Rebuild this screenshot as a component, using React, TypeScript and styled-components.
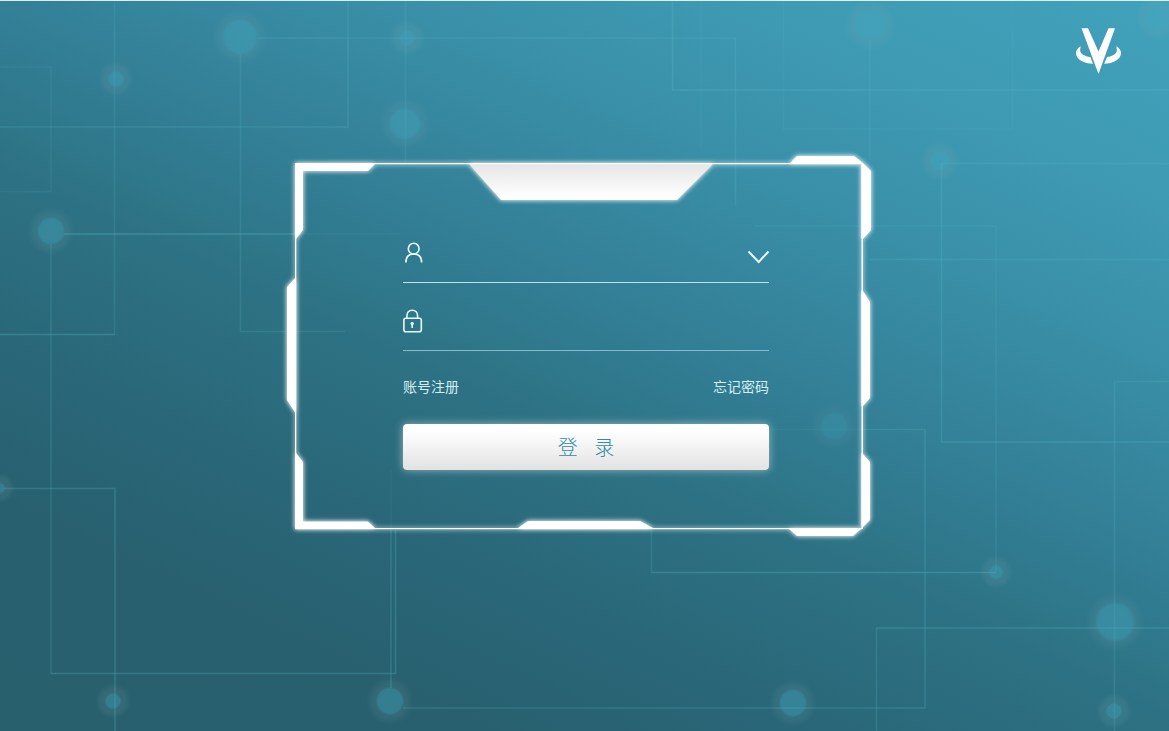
import React from "react";
import styled, { createGlobalStyle } from "styled-components";

const GlobalStyle = createGlobalStyle`
  *, *::before, *::after { box-sizing: border-box; }
  body {
    margin: 0;
    font-family: "Liberation Sans", "Noto Sans CJK SC", sans-serif;
    color: #fff;
  }
`;

const Page = styled.div`
  position: relative;
  display: flex;
  flex-direction: column;
  min-height: 100vh;
  overflow: hidden;
  border-top: 1px solid #d9f1f5;
  background: linear-gradient(
    25deg,
    #28606e 0%,
    #28606f 18%,
    #296677 29%,
    #2d7284 44%,
    #338097 57%,
    #398fa7 71%,
    #3f9bb4 86%,
    #41a1bb 100%
  );
`;

const Circuit = styled.svg`
  position: absolute;
  inset: 0;
  width: 100%;
  height: 100%;
  pointer-events: none;
`;

const Header = styled.header`
  position: relative;
  display: flex;
  justify-content: flex-end;
  padding: 26px 46px 0;
`;

const LogoLink = styled.a`
  display: block;
  width: 48px;
  height: 48px;
  color: #fff;
`;

const Main = styled.main`
  position: relative;
  display: flex;
  justify-content: center;
  padding: 81px 12px 64px 0;
`;

const Panel = styled.section`
  position: relative;
  width: 583px;
  max-width: 100%;
  padding: 59px 101px 66px 116px;
`;

const Frame = styled.svg`
  position: absolute;
  inset: 0;
  width: 100%;
  height: 100%;
  overflow: visible;
  pointer-events: none;
  filter: drop-shadow(0 0 2px rgba(255, 255, 255, 0.6))
    drop-shadow(0 0 2px rgba(255, 255, 255, 0.6));
`;

const Form = styled.form`
  position: relative;
  display: flex;
  flex-direction: column;
`;

const Field = styled.label<{ $line: string }>`
  display: flex;
  align-items: center;
  gap: 16px;
  height: 68px;
  padding-top: 8px;
  border-bottom: 1px solid ${(p) => p.$line};
`;

const FieldIcon = styled.svg`
  flex: none;
  width: 20px;
  height: 24px;
  fill: none;
  stroke: #e6fbff;
  stroke-width: 1.6;
`;

const Input = styled.input`
  flex: 1;
  min-width: 0;
  height: 40px;
  padding: 0;
  border: 0;
  outline: 0;
  background: transparent;
  color: #fff;
  font: inherit;
  font-size: 16px;
`;

const Toggle = styled.button`
  flex: none;
  width: 22px;
  height: 24px;
  padding: 0;
  border: 0;
  background: transparent;
  cursor: pointer;
  svg {
    display: block;
    fill: none;
    stroke: #e6fbff;
    stroke-width: 2;
  }
`;

const Links = styled.nav`
  display: flex;
  justify-content: space-between;
  margin: 26px 0 27px;
`;

const TextLink = styled.a`
  color: #d3edf2;
  font-size: 14px;
  font-weight: 400;
  line-height: 20px;
  text-decoration: none;
`;

const Submit = styled.button`
  height: 46px;
  padding: 2px 0 0;
  border: 0;
  border-radius: 4px;
  background: linear-gradient(#fff 15%, #e2e2e2);
  box-shadow: 0 0 8px rgba(255, 255, 255, 0.5);
  color: #318ba6;
  font-family: inherit;
  font-size: 20px;
  font-weight: 300;
  line-height: 44px;
  white-space: pre;
  cursor: pointer;
`;

const traces: { d: string; o: number }[] = [
  { d: "M257 38H735.500V205", o: 0.3 },
  { d: "M348 0V127H0", o: 0.28 },
  { d: "M114.500 0V334.500", o: 0.24 },
  { d: "M0 334.500H115", o: 0.42 },
  { d: "M0 67H51V191.500H0", o: 0.16 },
  { d: "M240.500 54V331.500H345", o: 0.24 },
  { d: "M64 234H296", o: 0.48 },
  { d: "M296 234H400", o: 0.15 },
  { d: "M51 244V673.500", o: 0.26 },
  { d: "M51 673.500H395.500V530", o: 0.36 },
  { d: "M391 530V688", o: 0.32 },
  { d: "M391 470V530", o: 0.1 },
  { d: "M405.500 0V162", o: 0.2 },
  { d: "M4 488.500H115V731", o: 0.34 },
  { d: "M403 708H925V429.500H860", o: 0.3 },
  { d: "M860 429.500H772", o: 0.12 },
  { d: "M651.500 530V572.500", o: 0.24 },
  { d: "M651.500 572.500H996", o: 0.42 },
  { d: "M996 572V226H755", o: 0.2 },
  { d: "M876.500 731V628", o: 0.28 },
  { d: "M876.500 628H1169", o: 0.34 },
  { d: "M1114.500 731V381.500H1169", o: 0.28 },
  { d: "M941.500 163.500V442H1169", o: 0.34 },
  { d: "M941.500 163.500H1169", o: 0.34 },
  { d: "M870 259.500H1169", o: 0.32 },
  { d: "M870 40V160", o: 0.24 },
  { d: "M672.500 0V90H1169", o: 0.36 },
  { d: "M701 0V150", o: 0.14 },
  { d: "M783.500 0V129H1012.500V0", o: 0.14 },
];

const nodes: { x: number; y: number; r: number; o?: number }[] = [
  { x: 240, y: 37, r: 17 },
  { x: 116, y: 79, r: 7 },
  { x: 51, y: 231, r: 13 },
  { x: 407, y: 38, r: 7 },
  { x: 405, y: 124, r: 15 },
  { x: 870, y: 25, r: 15 },
  { x: 940, y: 161, r: 9 },
  { x: 1157, y: 18, r: 11 },
  { x: 0, y: 488, r: 4 },
  { x: 113, y: 701, r: 7 },
  { x: 390, y: 701, r: 13 },
  { x: 793, y: 703, r: 13 },
  { x: 834, y: 426, r: 13, o: 0.6 },
  { x: 996, y: 572, r: 6 },
  { x: 1115, y: 622, r: 19 },
  { x: 1114, y: 711, r: 7 },
];

const CircuitBackground = () => (
  <Circuit viewBox="0 0 1169 730" preserveAspectRatio="xMidYMid slice" aria-hidden="true">
    <defs>
      <radialGradient id="halo">
        <stop offset="0.4" stopColor="#7fa9b2" stopOpacity="0.16" />
        <stop offset="0.7" stopColor="#7fa9b2" stopOpacity="0.12" />
        <stop offset="1" stopColor="#7fa9b2" stopOpacity="0" />
      </radialGradient>
      <radialGradient id="core">
        <stop offset="0.85" stopColor="#32a8c4" stopOpacity="0.3" />
        <stop offset="1" stopColor="#32a8c4" stopOpacity="0.05" />
      </radialGradient>
    </defs>
    <g transform="translate(0 -1)">
      <g fill="none" stroke="#55bcc6" strokeWidth="1.6" opacity="0.75">
        {traces.map((t) => (
          <path key={t.d} d={t.d} strokeOpacity={t.o} />
        ))}
      </g>
      {nodes.map((n) => (
        <g key={`${n.x}-${n.y}`} opacity={n.o ?? 1}>
          <circle cx={n.x} cy={n.y} r={n.r + 11} fill="url(#halo)" />
          <circle cx={n.x} cy={n.y} r={n.r + 1} fill="url(#core)" />
        </g>
      ))}
    </g>
  </Circuit>
);

const PanelFrame = () => (
  <Frame viewBox="0 0 583 380" preserveAspectRatio="none" aria-hidden="true">
    <defs>
      <linearGradient id="tab" x1="0" y1="0" x2="0" y2="1">
        <stop offset="0" stopColor="#e6e6e6" />
        <stop offset="0.85" stopColor="#fdfdfd" />
        <stop offset="1" stopColor="#fff" />
      </linearGradient>
    </defs>
    <path d="M182 8H426L390 44H214Z" fill="url(#tab)" />
    <g fill="#fff">
      <path d="M8 7H575V8.300H8Z" />
      <path d="M8 372H575V373.300H8Z" />
      <path d="M8 7H9.300V373H8Z" />
      <path d="M574.500 7H576V373H574.500Z" />
      <path d="M8 7H89L81 15H16V74L9 83H8Z" />
      <path d="M9 121V258L0 244V131Z" />
      <path d="M8 297H9L16 306V365.500H81L88 372V373H8Z" />
      <path d="M231 373V372L241 365H353L366 372V373Z" />
      <path d="M502 8L510 0H567L576 7L584 15V74L576 83H574.500V8Z" />
      <path d="M574.500 135H576L583 146V242L576 250H574.500Z" />
      <path d="M574.500 298H576L583 306V364L574 373L566 380H510L502 373V372H574.500Z" />
    </g>
  </Frame>
);

const Logo = () => (
  <svg width="48" height="48" viewBox="0 0 48 48" fill="currentColor" aria-hidden="true">
    <path d="M6.500 1.300H13L23.500 24.500L33.500 1.300H40L23.500 47Z" />
    <path d="M5.700 19.300C3 20.800 1 23.300 1 26C1 32.500 9 36.700 18 36.800L15.300 30C9.500 29.300 5.600 27 5.200 24C5 22.300 5.600 20.700 5.700 19.300Z" />
    <path d="M41.300 19.300C44 20.800 46 23.300 46 26C46 32.500 38 36.700 29.200 36.800L32 30C37.500 29.300 41.400 27 41.800 24C42 22.300 41.400 20.700 41.300 19.300Z" />
  </svg>
);

export default function App() {
  return (
    <>
      <GlobalStyle />
      <Page>
        <CircuitBackground />
        <Header>
          <LogoLink href="#" aria-label="首页">
            <Logo />
          </LogoLink>
        </Header>
        <Main>
          <Panel>
            <PanelFrame />
            <Form onSubmit={(e) => e.preventDefault()}>
              <Field $line="#b9e4ec">
                <FieldIcon viewBox="0 0 20 24" aria-hidden="true">
                  <circle cx="10.700" cy="7.700" r="5.400" />
                  <path d="M2.900 21.500C2.900 16 6 13 10.700 13S18.600 16 18.600 21.500" />
                </FieldIcon>
                <Input type="text" name="account" aria-label="账号" autoComplete="username" />
                <Toggle type="button" aria-label="选择账号">
                  <svg width="22" height="24" viewBox="0 0 22 24" aria-hidden="true">
                    <path d="M1.500 10.500L11.700 21L21.500 10.500" />
                  </svg>
                </Toggle>
              </Field>
              <Field $line="#84bdca">
                <FieldIcon viewBox="0 0 20 24" aria-hidden="true">
                  <rect x="0.900" y="9.200" width="17.400" height="13.600" rx="2" />
                  <path d="M3.900 9V6.800C3.900 3.500 6 1.200 9.200 1.200S14.600 3.500 14.600 6.800V9" />
                  <circle cx="9.200" cy="14.600" r="1.700" fill="#e6fbff" stroke="none" />
                  <path d="M9.200 14.500V19" />
                </FieldIcon>
                <Input type="password" name="password" aria-label="密码" autoComplete="current-password" />
              </Field>
              <Links>
                <TextLink href="#register">账号注册</TextLink>
                <TextLink href="#forgot">忘记密码</TextLink>
              </Links>
              <Submit type="submit">{"登   录"}</Submit>
            </Form>
          </Panel>
        </Main>
      </Page>
    </>
  );
}
